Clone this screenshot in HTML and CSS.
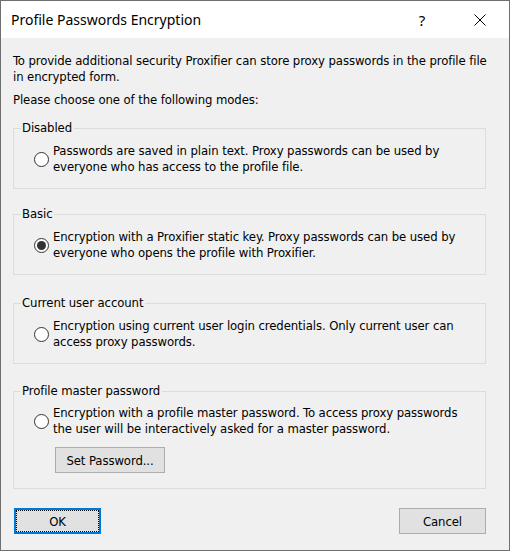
FILE: index.html
```html
<!DOCTYPE html>
<html>
<head>
<meta charset="utf-8">
<title>Profile Passwords Encryption</title>
<link rel="stylesheet" href="styles.css">
</head>
<body>
<div class="window">
  <div class="titlebar">
    <span class="title">Profile Passwords Encryption</span>
    <span class="tb-btn help">?</span>
    <span class="tb-btn close">
      <svg width="12" height="12" viewBox="0 0 12 12"><path d="M0.5 0.5 L11.5 11.5 M11.5 0.5 L0.5 11.5" stroke="#000" stroke-width="1" fill="none"/></svg>
    </span>
  </div>
  <div class="content">
    <p class="intro">To provide additional security Proxifier can store proxy passwords in the profile file<br>in encrypted form.</p>
    <p class="prompt">Please choose one of the following modes:</p>

    <fieldset class="group g1">
      <legend>Disabled</legend>
      <label class="option"><span class="radio"></span><span class="opt-text">Passwords are saved in plain text. Proxy passwords can be used by<br>everyone who has access to the profile file.</span></label>
    </fieldset>

    <fieldset class="group g2">
      <legend>Basic</legend>
      <label class="option"><span class="radio checked"></span><span class="opt-text">Encryption with a Proxifier static key. Proxy passwords can be used by<br>everyone who opens the profile with Proxifier.</span></label>
    </fieldset>

    <fieldset class="group g3">
      <legend>Current user account</legend>
      <label class="option"><span class="radio"></span><span class="opt-text">Encryption using current user login credentials. Only current user can<br>access proxy passwords.</span></label>
    </fieldset>

    <fieldset class="group g4">
      <legend>Profile master password</legend>
      <label class="option"><span class="radio"></span><span class="opt-text">Encryption with a profile master password. To access proxy passwords<br>the user will be interactively asked for a master password.</span></label>
      <button class="btn setpw">Set Password...</button>
    </fieldset>

    <div class="actions">
      <button class="btn default">OK</button>
      <button class="btn">Cancel</button>
    </div>
  </div>
</div>
</body>
</html>
```
FILE: styles.css
```css
* { box-sizing: border-box; }
html, body { margin: 0; padding: 0; background: #f0f0f0; }
.window {
  width: 510px;
  height: 551px;
  border: 1px solid #6f6f6f;
  background: #f0f0f0;
  display: flex;
  flex-direction: column;
  font-family: "DejaVu Sans Condensed", "DejaVu Sans", sans-serif;
  font-size: 13px;
  line-height: 16px;
  letter-spacing: -0.1px;
  color: #000;
}
.titlebar {
  height: 37px;
  background: #fff;
  display: flex;
  align-items: center;
  flex-shrink: 0;
  letter-spacing: 0;
}
.title {
  flex: 1;
  padding-left: 10px;
  font-family: "Noto Sans", "Open Sans", sans-serif;
  font-size: 14px;
  color: #000;
  padding-top: 1px;
}
.tb-btn {
  width: 58px;
  height: 37px;
  display: flex;
  align-items: center;
  justify-content: center;
}
.help {
  font-family: "Noto Sans", sans-serif;
  font-size: 15px;
}
.close svg { display: block; margin-top: 1px; }
.content {
  flex: 1;
  padding: 15px 23px 0 12px;
}
p { margin: 0; white-space: nowrap; }
.prompt { margin-top: 7px; }
.group {
  margin: 0;
  padding: 0 0 13px 0;
  border: 1px solid #dcdcdc;
  min-width: 0;
}
.group legend {
  margin-left: 7px;
  padding: 0 2px 0 1px;
  line-height: 16px;
}
.g1 { margin-top: 12px; }
.g2 { margin-top: 17px; }
.g3 { margin-top: 20px; }
.g4 { margin-top: 19px; padding-bottom: 15px; }
.option {
  display: flex;
  align-items: center;
  margin: 7px 0 0 20px;
  white-space: nowrap;
}
.g4 .option { margin-top: 6px; }
.radio {
  width: 15px;
  height: 15px;
  border: 1px solid #333;
  border-radius: 50%;
  background: #fff;
  flex-shrink: 0;
  margin-right: 4px;
  margin-top: 1px;
  display: flex;
  align-items: center;
  justify-content: center;
}
.radio.checked::after {
  content: "";
  width: 9px;
  height: 9px;
  border-radius: 50%;
  background: #333;
}
.btn {
  font-family: inherit;
  font-size: 13px;
  letter-spacing: inherit;
  color: #000;
  background: #e1e1e1;
  border: 1px solid #adadad;
  height: 26px;
  padding: 0;
  margin: 0;
  display: block;
}
.setpw {
  width: 110px;
  margin: 10px 0 0 41px;
}
.actions {
  display: flex;
  justify-content: space-between;
  margin-top: 19px;
  padding-left: 1px;
}
.actions .btn { width: 87px; }
.btn.default {
  border: 2px solid #0078d7;
  outline: 1px dotted #000;
  outline-offset: -3px;
}
```
